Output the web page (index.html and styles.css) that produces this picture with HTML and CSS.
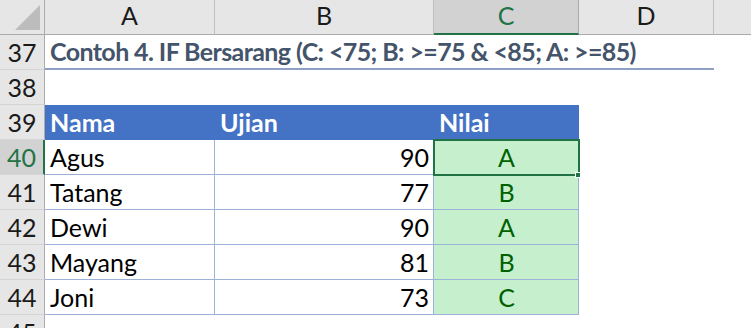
FILE: index.html
```html
<!DOCTYPE html>
<html lang="id">
<head>
    <meta charset="UTF-8">
    <meta name="viewport" content="width=device-width, initial-scale=1.0">
    <title>Contoh IF Bersarang</title>
    <link rel="stylesheet" href="styles.css">
</head>
<body>
    <div class="sheet">
        <!-- column headers -->
        <div class="corner">
            <svg width="44" height="34" viewBox="0 0 44 34"><polygon points="40,5 40,30 15,30" fill="#bcbcbc"/></svg>
        </div>
        <div class="col-head">A</div>
        <div class="col-head">B</div>
        <div class="col-head active">C</div>
        <div class="col-head">D</div>
        <div class="col-head last"></div>

        <!-- 37 -->
        <div class="row-head">37</div>
        <div class="title">Contoh 4. IF Bersarang (C: &lt;75; B: &gt;=75 &amp; &lt;85; A: &gt;=85)</div>
        <div class="blank"></div>

        <!-- 38 -->
        <div class="row-head">38</div>
        <div class="blank wide"></div>

        <!-- 39 -->
        <div class="row-head">39</div>
        <div class="th">Nama</div>
        <div class="th">Ujian</div>
        <div class="th">Nilai</div>
        <div class="blank rest"></div>

        <div class="row-head active">40</div>
        <div class="td">Agus</div>
        <div class="td num">90</div>
        <div class="td grade current">A<span class="handle"></span></div>
        <div class="blank rest"></div>

        <div class="row-head">41</div>
        <div class="td">Tatang</div>
        <div class="td num">77</div>
        <div class="td grade">B</div>
        <div class="blank rest"></div>

        <div class="row-head">42</div>
        <div class="td">Dewi</div>
        <div class="td num">90</div>
        <div class="td grade">A</div>
        <div class="blank rest"></div>

        <div class="row-head">43</div>
        <div class="td">Mayang</div>
        <div class="td num">81</div>
        <div class="td grade">B</div>
        <div class="blank rest"></div>

        <div class="row-head">44</div>
        <div class="td">Joni</div>
        <div class="td num">73</div>
        <div class="td grade">C</div>
        <div class="blank rest"></div>

        <div class="row-head">45</div>
        <div class="blank wide"></div>
    </div>
</body>
</html>
```

FILE: styles.css
```css
* {
    margin: 0;
    padding: 0;
    box-sizing: border-box;
}

body {
    background: #fff;
    font-family: Lato, "Liberation Sans", sans-serif;
    font-size: 25px;
    color: #000;
    overflow: hidden;
}

.sheet {
    display: grid;
    grid-template-columns: 45px 170px 219px 145px 135px 1fr;
    grid-auto-rows: 35px;
    width: 751px;
}

.corner {
    background: #e6e6e6;
    border-right: 1px solid #ababab;
    border-bottom: 1px solid #ababab;
}

.corner svg {
    display: block;
}

.col-head {
    background: #e6e6e6;
    border-right: 1px solid #c0c0c0;
    border-bottom: 1px solid #ababab;
    text-align: center;
    line-height: 30px;
    color: #1a1a1a;
}

.col-head.active {
    background: #d2d2d2;
    color: #217346;
    border-right-color: #ababab;
    border-bottom: 2px solid #217346;
}

.col-head.last {
    border-right: none;
}

.row-head {
    background: #e6e6e6;
    border-right: 1px solid #ababab;
    border-bottom: 1px solid #d4d4d4;
    text-align: center;
    line-height: 34px;
    color: #1a1a1a;
}

.row-head.active {
    background: #d2d2d2;
    color: #217346;
    border-right: 2px solid #217346;
}

.title {
    grid-column: 2 / 6;
    border-bottom: 2px solid #8ea1c4;
    padding-left: 5px;
    line-height: 33px;
    font-weight: bold;
    color: #44546a;
    white-space: nowrap;
    letter-spacing: -0.6px;
}

.blank.wide {
    grid-column: 2 / -1;
}

.blank.rest {
    grid-column: 5 / -1;
}

.th {
    background: #4472c4;
    color: #fff;
    font-weight: bold;
    padding-left: 5px;
    line-height: 34px;
}

.td {
    border-right: 1px solid #9cb1d6;
    border-bottom: 1px solid #9cb1d6;
    padding: 0 4px 0 5px;
    line-height: 34px;
}

.td.num {
    text-align: right;
}

.td.grade {
    background: #c6efce;
    color: #006100;
    text-align: center;
}

/* active cell frame + fill handle */
.td.current {
    position: relative;
}

.td.current::before {
    content: "";
    position: absolute;
    left: -1px;
    top: -1px;
    right: -2px;
    bottom: -2px;
    border: 2px solid #217346;
}

.handle {
    position: absolute;
    right: -3px;
    bottom: -4px;
    width: 6px;
    height: 6px;
    background: #217346;
    border: 1px solid #fff;
}
```
